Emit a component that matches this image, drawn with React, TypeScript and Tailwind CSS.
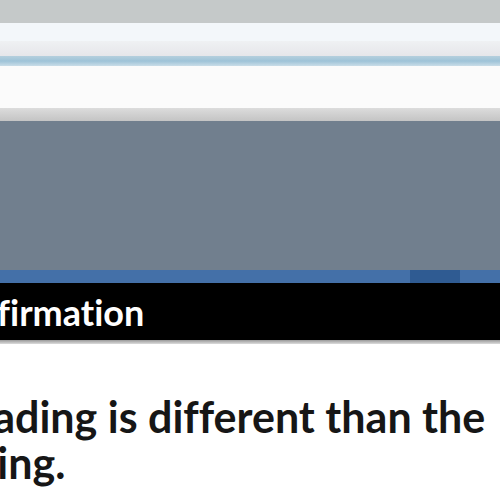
export default function App() {
  return (
    <div className="w-[500px] h-[500px] overflow-hidden bg-white flex flex-col font-['Lato','Liberation_Sans',sans-serif] [font-variant-ligatures:none]">
      {/* browser chrome */}
      <div className="h-[23px] bg-[#c5c9c9]" />
      <div className="h-[18px] bg-[#f3f7fa]" />
      <div className="h-[15px] bg-gradient-to-b from-[#eff1f3] to-[#e6e6ea]" />
      <div className="h-[10px] bg-gradient-to-b from-[#b5cfdd] via-[#9ec3d8] to-[#c9dde8]" />
      <div className="h-[42px] bg-[#fbfbfb]" />
      <div className="h-[13px] bg-gradient-to-b from-[#dcdcdc] to-[#c4c4c4]" />

      {/* page backdrop */}
      <div className="h-[149px] bg-[#717f8e]" />
      <div className="h-[13px] bg-[#4470a8] flex">
        <div className="w-[410px]" />
        <div className="w-[50px] bg-[#2f5b92]" />
      </div>

      {/* dialog title bar */}
      <div className="h-[57px] bg-black flex items-center">
        <h1 className="ml-[-67px] text-[36px] font-bold text-white whitespace-nowrap leading-none">Confirmation</h1>
      </div>
      <div className="h-[4px] bg-gradient-to-b from-[#9a9a9a] to-[#dcdcdc]" />

      {/* dialog body */}
      <div className="pt-[50px] ml-[-56px] text-[43px] font-bold text-[#161616] leading-[46px] whitespace-nowrap">
        <p>Reading is different than the</p>
        <p>rating.</p>
      </div>
    </div>
  );
}
